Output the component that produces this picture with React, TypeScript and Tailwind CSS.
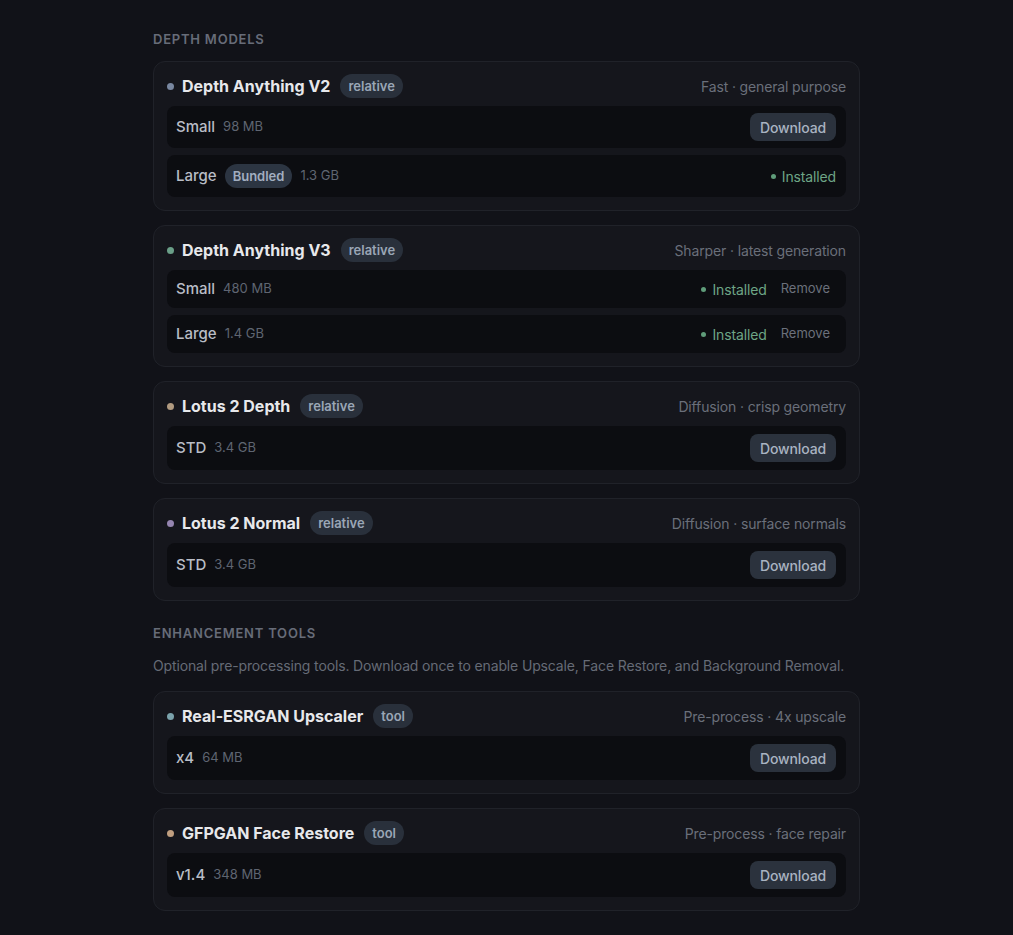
type Variant = {
  name: string;
  size: string;
  bundled?: boolean;
  status: "download" | "installed" | "removable";
};

type Model = {
  title: string;
  badge: string;
  note: string;
  dot: string;
  variants: Variant[];
};

const DEPTH: Model[] = [
  {
    title: "Depth Anything V2",
    badge: "relative",
    note: "Fast · general purpose",
    dot: "bg-[#7887a0]",
    variants: [
      { name: "Small", size: "98 MB", status: "download" },
      { name: "Large", size: "1.3 GB", bundled: true, status: "installed" },
    ],
  },
  {
    title: "Depth Anything V3",
    badge: "relative",
    note: "Sharper · latest generation",
    dot: "bg-[#6a9f88]",
    variants: [
      { name: "Small", size: "480 MB", status: "removable" },
      { name: "Large", size: "1.4 GB", status: "removable" },
    ],
  },
  {
    title: "Lotus 2 Depth",
    badge: "relative",
    note: "Diffusion · crisp geometry",
    dot: "bg-[#b09a80]",
    variants: [{ name: "STD", size: "3.4 GB", status: "download" }],
  },
  {
    title: "Lotus 2 Normal",
    badge: "relative",
    note: "Diffusion · surface normals",
    dot: "bg-[#9585b0]",
    variants: [{ name: "STD", size: "3.4 GB", status: "download" }],
  },
];

const TOOLS: Model[] = [
  {
    title: "Real-ESRGAN Upscaler",
    badge: "tool",
    note: "Pre-process · 4x upscale",
    dot: "bg-[#7aa2ab]",
    variants: [{ name: "x4", size: "64 MB", status: "download" }],
  },
  {
    title: "GFPGAN Face Restore",
    badge: "tool",
    note: "Pre-process · face repair",
    dot: "bg-[#c09f80]",
    variants: [{ name: "v1.4", size: "348 MB", status: "download" }],
  },
];

function Installed() {
  return (
    <span className="flex items-center gap-1.5 text-[14px] tracking-[-0.01em] text-[#6ea586]">
      <span className="h-[5px] w-[5px] rounded-full bg-[#5f9c7a]" />
      Installed
    </span>
  );
}

// single-variant cards sit a little taller in the original
function VariantRow({ v, single }: { v: Variant; single: boolean }) {
  const height = single ? "h-[44px]" : v.status === "removable" ? "h-[38px]" : "h-[42px]";
  return (
    <div className={`flex ${height} items-center justify-between rounded-lg bg-[#0c0d11] pl-[9px] pr-2.5`}>
      <div className="flex items-center gap-2">
        <span className="text-[15px] font-medium text-[#b9bdc6]">{v.name}</span>
        {v.bundled && (
          <span className="rounded-full bg-[#2c3542] px-2 py-[3px] text-[13px] font-semibold leading-[18px] text-[#a2aec0]">
            Bundled
          </span>
        )}
        <span className="text-[13px] text-[#5f6571]">{v.size}</span>
      </div>
      {v.status === "download" && (
        <button
          type="button"
          className="h-7 rounded-lg bg-[#2b323d] px-2.5 text-[14px] font-medium tracking-[-0.01em] text-[#a9b3c1]"
        >
          Download
        </button>
      )}
      {v.status === "installed" && <Installed />}
      {v.status === "removable" && (
        <div className="flex items-center gap-3.5">
          <Installed />
          <button type="button" className="pr-1.5 text-[13px] text-[#6b707b]">
            Remove
          </button>
        </div>
      )}
    </div>
  );
}

function ModelCard({ m }: { m: Model }) {
  const single = m.variants.length === 1;
  return (
    <div className="rounded-xl border border-[#202229] bg-[#15161c] px-[13px] pb-[13px] pt-[11px]">
      <div className="flex h-[26px] items-center justify-between">
        <div className="flex items-center">
          <span className={`h-[7px] w-[7px] rounded-full ${m.dot}`} />
          <span className="ml-2 text-[16px] font-bold text-[#e7e8eb]">{m.title}</span>
          <span className="ml-2.5 rounded-full bg-[#29303b] px-2 py-[3px] text-[13px] font-semibold leading-[18px] text-[#9aa6b6]">
            {m.badge}
          </span>
        </div>
        <span className="text-[14px] tracking-[-0.01em] text-[#6a6f7a]">{m.note}</span>
      </div>
      <div className="mt-[7px] flex flex-col gap-[7px]">
        {m.variants.map((v) => (
          <VariantRow key={v.name} v={v} single={single} />
        ))}
      </div>
    </div>
  );
}

function SectionHeading({ children }: { children: string }) {
  return (
    <h2 className="text-[13px] font-semibold uppercase leading-5 tracking-[0.06em] text-[#676c78]">
      {children}
    </h2>
  );
}

export default function App() {
  return (
    <div
      className="min-h-screen w-full bg-[#111218] pb-6 pt-[29px]"
      style={{ fontFamily: "Inter, 'Noto Sans', sans-serif" }}
    >
      <div className="mx-auto w-[707px]">
        <SectionHeading>Depth Models</SectionHeading>
        <div className="mt-3 flex flex-col gap-3.5">
          {DEPTH.map((m) => (
            <ModelCard key={m.title} m={m} />
          ))}
        </div>

        <div className="mt-[22px]">
          <SectionHeading>Enhancement Tools</SectionHeading>
        </div>
        <p className="mt-[13px] text-[14px] leading-5 tracking-[-0.01em] text-[#666b76]">
          Optional pre-processing tools. Download once to enable Upscale, Face Restore, and Background Removal.
        </p>
        <div className="mt-[15px] flex flex-col gap-3.5">
          {TOOLS.map((m) => (
            <ModelCard key={m.title} m={m} />
          ))}
        </div>
      </div>
    </div>
  );
}
